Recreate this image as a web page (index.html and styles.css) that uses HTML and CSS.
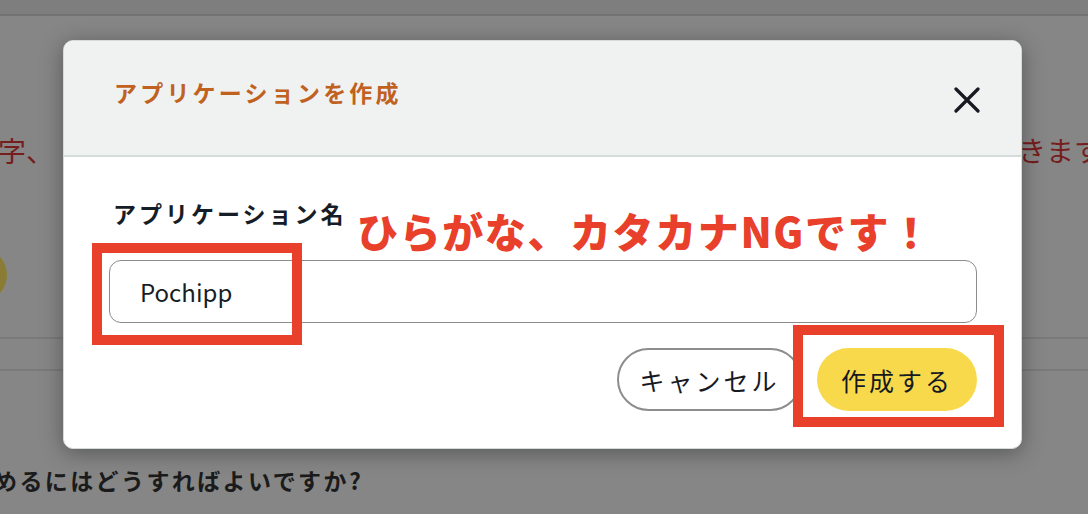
FILE: index.html
```html
<!DOCTYPE html>
<html lang="ja">
<head>
    <meta charset="UTF-8">
    <meta name="viewport" content="width=device-width, initial-scale=1.0">
    <title>アプリケーションを作成</title>
    <link rel="stylesheet" href="styles.css">
</head>
<body>
    <div class="page">
        <div class="topbar"></div>
        <div class="notice">
            <span class="notice-left">字、</span>
            <span class="notice-right">きます</span>
        </div>
        <div class="avatar-row">
            <div class="avatar"></div>
        </div>
        <div class="divider"></div>
        <div class="divider-space"></div>
        <div class="question">めるにはどうすればよいですか?</div>
    </div>

    <div class="modal">
        <div class="modal-header">
            <h2 class="modal-title">アプリケーションを作成</h2>
            <button class="modal-close" aria-label="閉じる">
                <svg width="26" height="26" viewBox="0 0 26 26">
                    <path d="M2 2 L24 24 M24 2 L2 24" stroke="#16191f" stroke-width="3.2" stroke-linecap="round" fill="none"/>
                </svg>
            </button>
        </div>
        <div class="modal-body">
            <label class="field-label" for="app-name">アプリケーション名</label>
            <input class="field-input" id="app-name" type="text" value="Pochipp">
            <div class="modal-actions">
                <button class="button button-cancel">キャンセル</button>
                <button class="button button-primary">作成する</button>
            </div>
        </div>
    </div>

    <div class="mark mark-input"></div>
    <div class="mark mark-button"></div>
    <div class="mark-note">ひらがな、カタカナNGです！</div>
</body>
</html>
```

FILE: styles.css
```css
body {
    margin: 0;
    background-color: #868686;
    font-family: "Noto Sans CJK JP", "Noto Sans", sans-serif;
    overflow: hidden;
}
.page {
    height: 514px;
    display: flex;
    flex-direction: column;
}
.topbar {
    height: 14px;
    background-color: #7e7e7e;
    border-bottom: 2px solid #727272;
}
.notice {
    display: flex;
    justify-content: space-between;
    align-items: center;
    height: 40px;
    margin-top: 114px;
    font-size: 28px;
    color: #761d1d;
    overflow: hidden;
}
.notice-left {
    margin-left: -2px;
}
.notice-right {
    margin-right: -14px;
}
.avatar-row {
    height: 54px;
    margin-top: 78px;
}
.avatar {
    width: 54px;
    height: 54px;
    border-radius: 50%;
    background-color: #8a7c34;
    margin-left: -47px;
}
.divider {
    height: 2px;
    margin-top: 35px;
    background-color: #7a7a7a;
}
.divider-space {
    height: 30px;
    border-bottom: 2px solid #7a7a7a;
}
.question {
    margin-top: 94px;
    margin-left: -6px;
    font-size: 23px;
    font-weight: bold;
    color: #1b1b1b;
    letter-spacing: 2.4px;
    line-height: 30px;
}
.modal {
    position: absolute;
    left: 63px;
    top: 40px;
    width: 957px;
    background-color: #fff;
    border: 1px solid #d5dbdb;
    border-radius: 10px;
    box-shadow: 0 4px 22px rgba(0, 0, 0, 0.35);
    overflow: hidden;
}
.modal-header {
    display: flex;
    justify-content: space-between;
    align-items: center;
    height: 114px;
    padding: 0 41px 0 50px;
    background-color: #f0f2f1;
    border-bottom: 2px solid #d5dbdb;
}
.modal-title {
    margin: 0 0 12px;
    font-size: 23px;
    font-weight: bold;
    letter-spacing: 3.2px;
    color: #c0611f;
}
.modal-close {
    border: none;
    background: none;
    padding: 0;
    margin-top: 3px;
    width: 26px;
    height: 26px;
    cursor: pointer;
}
.modal-body {
    display: flex;
    flex-direction: column;
    padding: 38px 44px 37px 45px;
}
.field-label {
    padding-left: 4px;
    font-size: 23px;
    font-weight: bold;
    letter-spacing: 3px;
    line-height: 36px;
    color: #161d26;
}
.field-input {
    box-sizing: border-box;
    height: 63px;
    margin-top: 29px;
    padding: 0 30px;
    font-family: "Noto Sans CJK JP", sans-serif;
    font-size: 24px;
    color: #161d26;
    border: 1px solid #8c8c8c;
    border-radius: 12px;
    outline: none;
}
.modal-actions {
    display: flex;
    justify-content: flex-end;
    gap: 15px;
    margin-top: 25px;
}
.button {
    height: 63px;
    border-radius: 32px;
    font-family: "Noto Sans CJK JP", sans-serif;
    font-size: 25px;
    letter-spacing: 3px;
    color: #16191f;
    cursor: pointer;
}
.button-cancel {
    width: 185px;
    background-color: #fff;
    border: 2px solid #8d8d8d;
}
.button-primary {
    width: 160px;
    background-color: #f8d94c;
    border: none;
}
.mark {
    position: absolute;
    border: 10px solid #e8402a;
}
.mark-input {
    left: 92px;
    top: 243px;
    width: 190px;
    height: 82px;
}
.mark-button {
    left: 793px;
    top: 325px;
    width: 191px;
    height: 82px;
}
.mark-note {
    position: absolute;
    left: 357px;
    top: 205px;
    font-size: 41px;
    font-weight: 900;
    line-height: 50px;
    letter-spacing: 1.6px;
    color: #e8402a;
    white-space: nowrap;
}
```
